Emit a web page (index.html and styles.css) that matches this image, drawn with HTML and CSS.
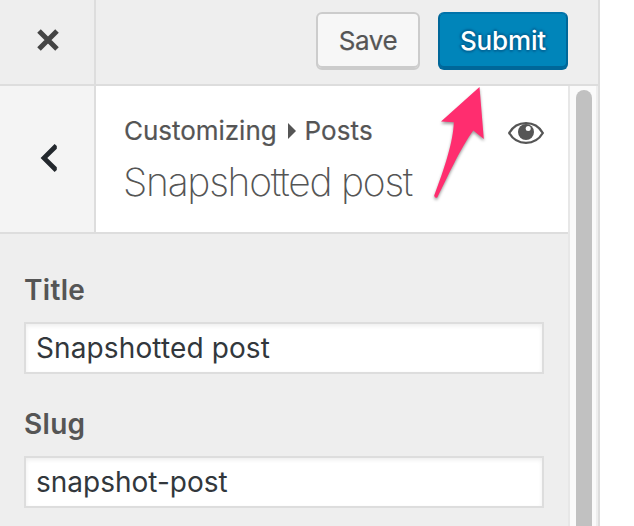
FILE: index.html
```html
<!DOCTYPE html>
<html lang="en">
<head>
<meta charset="utf-8">
<title>Customizing Posts</title>
<link rel="stylesheet" href="styles.css">
</head>
<body>
<div class="panel">
  <header class="topbar">
    <button class="close" aria-label="Close">
      <svg width="24" height="24" viewBox="0 0 24 24"><path d="M3 3 21 21M21 3 3 21" fill="none" stroke="#444" stroke-width="5"/></svg>
    </button>
    <div class="actions">
      <button class="button save"><span>Save</span></button>
      <button class="button submit"><span>Submit</span></button>
    </div>
  </header>
  <div class="body">
    <main class="content">
      <div class="section-head">
        <button class="back" aria-label="Back">
          <svg width="18" height="28" viewBox="0 0 18 28"><path d="M14.600 0 16.800 2V4.700L7.300 14 16.800 23.300V26L14.600 28 .6 14Z" fill="#23282d"/></svg>
        </button>
        <div class="heading">
          <div class="crumbs"><span class="crumb-root">Customizing</span><svg width="8" height="16" viewBox="0 0 8 16"><path d="M0 0 8 8 0 16Z" fill="#555"/></svg><span class="crumb-leaf">Posts</span></div>
          <h1>Snapshotted post</h1>
        </div>
        <svg class="eye" width="36" height="22" viewBox="0 0 36 22"><path d="M1.200 11C5 4.500 11 1.200 18 1.200S31 4.500 34.800 11C31 17.500 25 20.800 18 20.800S5 17.500 1.200 11Z" fill="#fff" stroke="#555" stroke-width="2.300"/><circle cx="18" cy="10" r="8" fill="#555"/><circle cx="20.200" cy="6.400" r="2.500" fill="#fff"/></svg>
      </div>
      <div class="fields">
        <label class="field"><span class="label">Title</span><span class="input input-title">Snapshotted post</span></label>
        <label class="field"><span class="label">Slug</span><span class="input">snapshot-post</span></label>
      </div>
    </main>
    <div class="scrollbar"><div class="thumb"></div></div>
  </div>
</div>
<svg class="arrow" width="60" height="124" viewBox="430 80 60 124"><path d="M479.500 87 441 121.500 453.800 122.300C453.500 141 444 170 434.200 195.500Q434.500 198.500 437.300 197.500C447 178 461 147 473.300 130.500L483.800 139Z"/></svg>
</body>
</html>
```
FILE: styles.css
```css
* { box-sizing: border-box; }
body {
  margin: 0;
  height: 526px;
  overflow: hidden;
  background: #fff;
  font-family: Inter, "Open Sans", sans-serif;
  color: #555;
}
button { font: inherit; color: inherit; border: 0; background: none; padding: 0; }
svg { display: block; flex: none; }
.panel {
  width: 600px;
  height: 526px;
  display: flex;
  flex-direction: column;
  border-right: 2px solid #ddd;
  background: #eee;
}
.topbar { display: flex; height: 86px; flex: none; border-bottom: 2px solid #ddd; }
.close {
  width: 96px;
  border-right: 2px solid #ddd;
  display: flex;
  align-items: center;
  justify-content: center;
  padding: 0 0 4px 2px;
}
.actions { flex: 1; display: flex; justify-content: flex-end; gap: 18px; padding: 12px 30px 0 0; }
.button {
  height: 58px;
  border-radius: 6px;
  border: 2px solid #ccc;
  font-size: 26px;
  line-height: 54px;
  white-space: nowrap;
}
.save {
  width: 104px;
  background: #f7f7f7;
  box-shadow: inset 0 -2px 0 #ccc;
  letter-spacing: -.4px;
  -webkit-text-stroke: .2px #555;
}
.submit {
  width: 130px;
  color: #fff;
  font-weight: 500;
  letter-spacing: -.15px;
  background: #0085ba;
  border-color: #0073aa #006799 #006799;
  box-shadow: inset 0 -2px 0 #006799;
  text-shadow: 0 -2px 2px #006799, 2px 0 2px #006799, 0 2px 2px #006799, -2px 0 2px #006799;
}
.body { flex: 1; display: flex; min-height: 0; }
.content { width: 568px; }
.section-head { display: flex; height: 148px; background: #fff; border-bottom: 2px solid #ddd; }
.back {
  width: 96px;
  background: #f4f4f4;
  border-right: 2px solid #ddd;
  display: flex;
  align-items: center;
  justify-content: center;
  padding: 0 0 3px 4px;
}
.heading { flex: 1; padding: 26px 0 0 28px; }
.crumbs {
  display: flex;
  align-items: center;
  height: 36px;
  font-size: 26px;
  -webkit-text-stroke: .2px #555;
}
.crumb-root { width: 152px; letter-spacing: -.03px; }
.crumb-leaf { letter-spacing: .1px; }
.crumbs svg { margin: 2px 8.5px 0 12px; }
h1 {
  margin: 8px 0 0 -1px;
  font-size: 39px;
  line-height: 52px;
  font-weight: 200;
  letter-spacing: -1.25px;
  white-space: nowrap;
}
.eye { margin: 36px 24px 0 0; }
.fields { padding: 38px 24px 0; }
.field { display: block; height: 134px; }
.label { display: block; height: 50px; line-height: 36px; font-size: 28px; font-weight: 600; letter-spacing: .3px; }
.input {
  display: block;
  height: 52px;
  border: 2px solid #ddd;
  background: #fff;
  box-shadow: inset 0 2px 4px rgba(0, 0, 0, .07);
  padding-left: 10px;
  font-size: 28px;
  line-height: 48px;
  color: #32373c;
}
.input-title { letter-spacing: .12px; }
.scrollbar {
  flex: 1;
  background: #fafafa;
  border-left: 2px solid #e7e7e7;
  border-right: 2px solid #eee;
  padding: 4px 4px 0 6px;
  display: flex;
}
.thumb { width: 16px; border-radius: 8px 8px 0 0; background: #c1c1c1; }
.arrow {
  position: absolute;
  left: 430px;
  top: 80px;
  overflow: visible;
  fill: #ff2d6f;
  filter: drop-shadow(0 2px 1.5px rgba(0, 0, 0, .4));
}
```
